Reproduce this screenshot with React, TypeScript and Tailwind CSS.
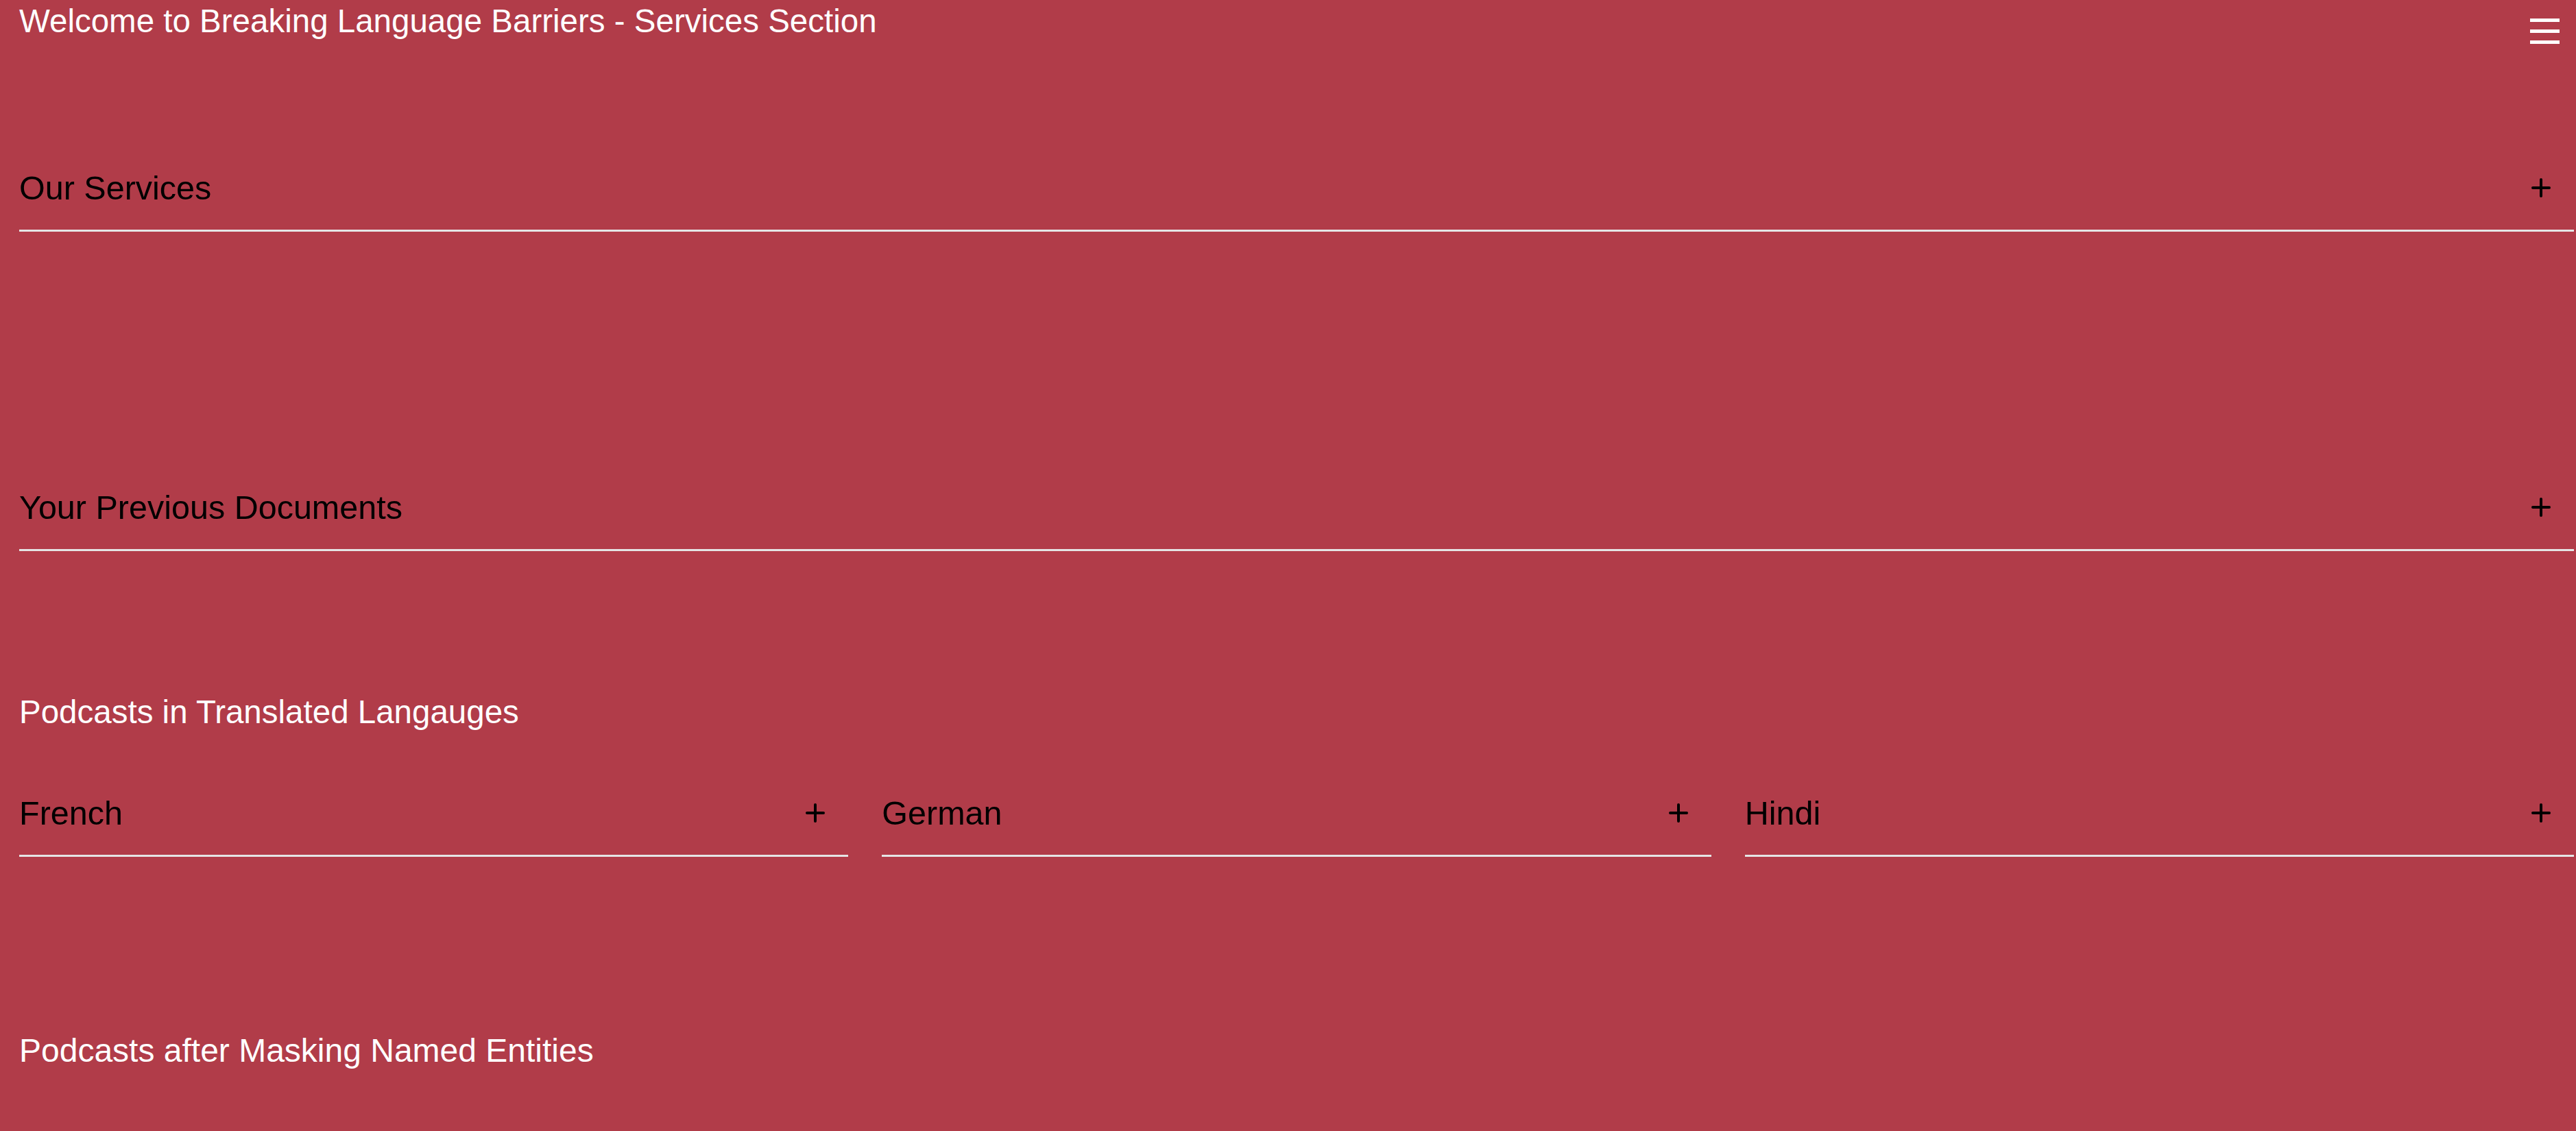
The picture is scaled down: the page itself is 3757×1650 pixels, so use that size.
import React from "react";

const font = "font-['Liberation_Sans',Arial,sans-serif]";

function PlusIcon(): React.JSX.Element {
    return (
        <svg width="28" height="28" viewBox="0 0 28 28" className="shrink-0">
            <line x1="14" y1="2" x2="14" y2="26" stroke="#000" strokeWidth="4" strokeLinecap="round"/>
            <line x1="2" y1="14" x2="26" y2="14" stroke="#000" strokeWidth="4" strokeLinecap="round"/>
        </svg>
    );
}

function AccordionRow(props: { title: string }): React.JSX.Element {
    return (
        <div className="h-[125px] flex items-center justify-between border-b-[3px] border-[#e5e5e5] pr-[34px] cursor-pointer">
            <span className="text-[48.5px] leading-[56px] text-black">{props.title}</span>
            <PlusIcon/>
        </div>
    );
}

export default function App(): React.JSX.Element {
    const languages = ["French", "German", "Hindi"];

    return (
        <div className={`min-h-screen w-full bg-[#b13c49] pl-[28px] pr-[3px] ${font}`}>
            <header className="h-[96px] flex justify-between items-start">
                <h1 className="text-[47.5px] leading-[62px] text-white font-normal">
                    Welcome to Breaking Language Barriers - Services Section
                </h1>
                <button className="mt-[27px] mr-[21px] flex flex-col gap-[11px]" aria-label="menu">
                    <span className="block w-[43px] h-[5px] bg-white"/>
                    <span className="block w-[43px] h-[5px] bg-white"/>
                    <span className="block w-[43px] h-[5px] bg-white"/>
                </button>
            </header>

            <section className="mt-[117px]">
                <AccordionRow title="Our Services"/>
            </section>

            <section className="mt-[341px]">
                <AccordionRow title="Your Previous Documents"/>
            </section>

            <h2 className="mt-[207px] text-[47.5px] leading-[56px] text-white">
                Podcasts in Translated Langauges
            </h2>

            <div className="mt-[58px] grid grid-cols-3 gap-[49px]">
                {languages.map((lang) => (
                    <AccordionRow key={lang} title={lang}/>
                ))}
            </div>

            <h2 className="mt-[255px] text-[48px] leading-[56px] text-white pb-[40px]">
                Podcasts after Masking Named Entities
            </h2>
        </div>
    );
}
